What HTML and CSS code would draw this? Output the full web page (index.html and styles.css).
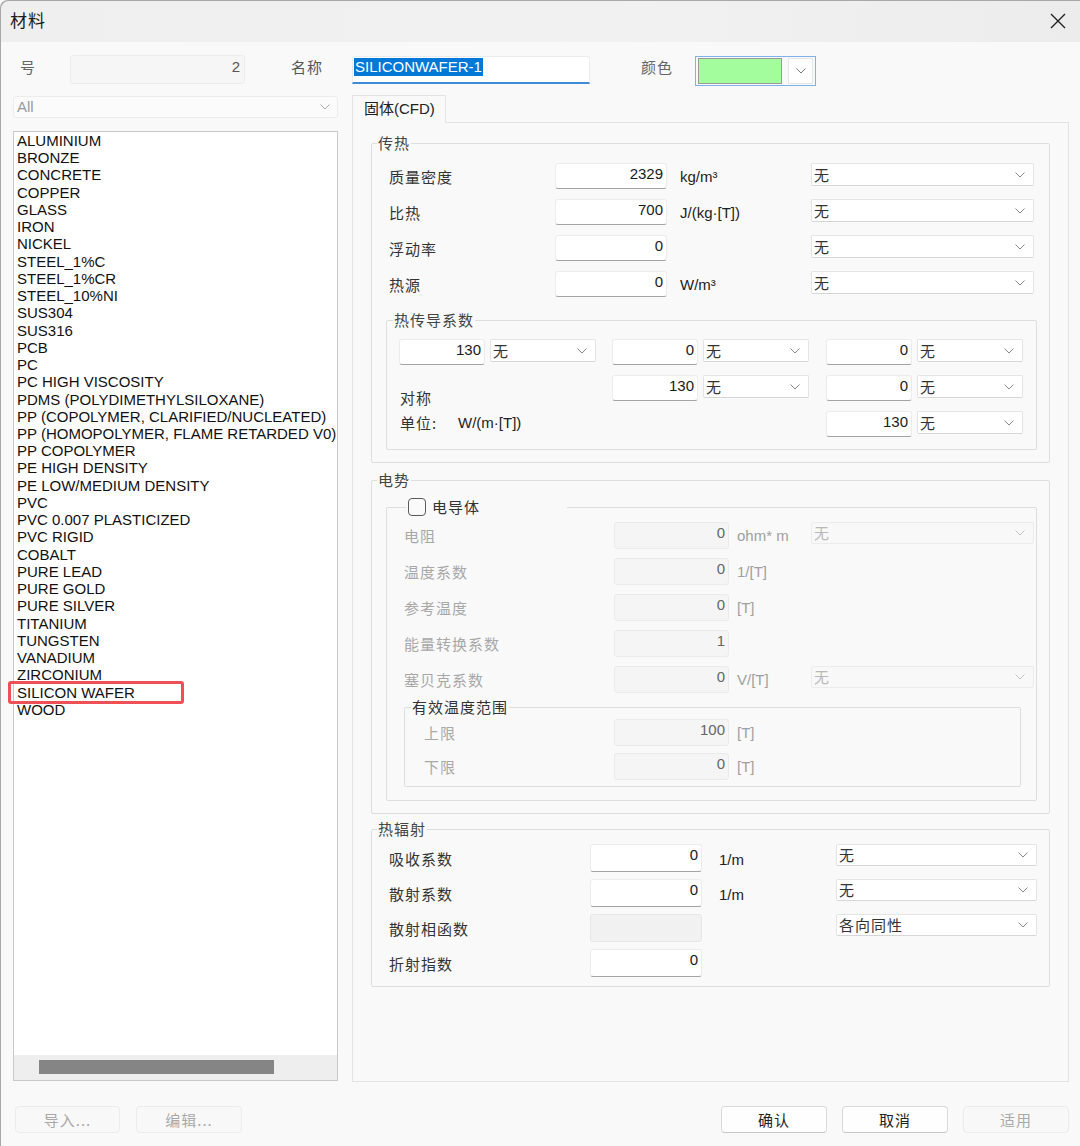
FILE: index.html
```html
<!DOCTYPE html>
<html lang="zh-CN">
<head>
<meta charset="utf-8">
<title>材料</title>
<link rel="stylesheet" href="styles.css">
</head>
<body>
<div class="window">
  <div class="titlebar">
    <span class="title">材料</span>
    <svg class="close" width="16" height="16" viewBox="0 0 16 16"><path d="M1 1 L15 15 M15 1 L1 15" stroke="#222" stroke-width="1.4" fill="none"/></svg>
  </div>

  <div class="toprow">
    <span class="lbl lbl-no">号</span>
    <div class="f-no">2</div>
    <span class="lbl lbl-name">名称</span>
    <div class="namefield"><span class="sel">SILICONWAFER-1</span></div>
    <span class="lbl lbl-color">颜色</span>
    <div class="colorcombo">
      <div class="swatch"></div>
      <div class="cbtn"><svg class="chev" width="10" height="6" viewBox="0 0 10 6"><path d="M0.5 0.5 L5 5 L9.5 0.5" fill="none" stroke="#777" stroke-width="1"/></svg></div>
    </div>
  </div>

  <div class="main">
    <div class="leftcol">
      <div class="filter"><span>All</span><svg class="chev" width="10" height="6" viewBox="0 0 10 6"><path d="M0.5 0.5 L5 5 L9.5 0.5" fill="none" stroke="#aaa" stroke-width="1"/></svg></div>
      <div class="list">
        <div class="items">
          <div class="it">ALUMINIUM</div>
          <div class="it">BRONZE</div>
          <div class="it">CONCRETE</div>
          <div class="it">COPPER</div>
          <div class="it">GLASS</div>
          <div class="it">IRON</div>
          <div class="it">NICKEL</div>
          <div class="it">STEEL_1%C</div>
          <div class="it">STEEL_1%CR</div>
          <div class="it">STEEL_10%NI</div>
          <div class="it">SUS304</div>
          <div class="it">SUS316</div>
          <div class="it">PCB</div>
          <div class="it">PC</div>
          <div class="it">PC HIGH VISCOSITY</div>
          <div class="it">PDMS (POLYDIMETHYLSILOXANE)</div>
          <div class="it">PP (COPOLYMER, CLARIFIED/NUCLEATED)</div>
          <div class="it">PP (HOMOPOLYMER, FLAME RETARDED V0)</div>
          <div class="it">PP COPOLYMER</div>
          <div class="it">PE HIGH DENSITY</div>
          <div class="it">PE LOW/MEDIUM DENSITY</div>
          <div class="it">PVC</div>
          <div class="it">PVC 0.007 PLASTICIZED</div>
          <div class="it">PVC RIGID</div>
          <div class="it">COBALT</div>
          <div class="it">PURE LEAD</div>
          <div class="it">PURE GOLD</div>
          <div class="it">PURE SILVER</div>
          <div class="it">TITANIUM</div>
          <div class="it">TUNGSTEN</div>
          <div class="it">VANADIUM</div>
          <div class="it">ZIRCONIUM</div>
          <div class="it marked">SILICON WAFER<span class="mark"></span></div>
          <div class="it">WOOD</div>
        </div>
        <div class="hscroll"><div class="thumb"></div></div>
      </div>
    </div>

    <div class="rightcol">
      <div class="tabs"><div class="tab">固体(CFD)</div></div>
      <div class="panel">

        <fieldset class="grp g1">
          <legend>传热</legend>
          <div class="gbody">
            <div class="rows r1">
              <span class="lab">质量密度</span><div class="in">2329</div><span class="unit">kg/m³</span>
              <div class="combo"><span>无</span><svg class="chev" width="10" height="6" viewBox="0 0 10 6"><path d="M0.5 0.5 L5 5 L9.5 0.5" fill="none" stroke="#888" stroke-width="1"/></svg></div>
              <span class="lab">比热</span><div class="in">700</div><span class="unit">J/(kg·[T])</span>
              <div class="combo"><span>无</span><svg class="chev" width="10" height="6" viewBox="0 0 10 6"><path d="M0.5 0.5 L5 5 L9.5 0.5" fill="none" stroke="#888" stroke-width="1"/></svg></div>
              <span class="lab">浮动率</span><div class="in">0</div><span class="unit"></span>
              <div class="combo"><span>无</span><svg class="chev" width="10" height="6" viewBox="0 0 10 6"><path d="M0.5 0.5 L5 5 L9.5 0.5" fill="none" stroke="#888" stroke-width="1"/></svg></div>
              <span class="lab">热源</span><div class="in">0</div><span class="unit">W/m³</span>
              <div class="combo"><span>无</span><svg class="chev" width="10" height="6" viewBox="0 0 10 6"><path d="M0.5 0.5 L5 5 L9.5 0.5" fill="none" stroke="#888" stroke-width="1"/></svg></div>
            </div>

            <fieldset class="grp sub tcgrp">
              <legend>热传导系数</legend>
              <div class="tc">
                <div class="cell c1 r1c"><div class="in tin">130</div><div class="combo tcb"><span>无</span><svg class="chev" width="10" height="6" viewBox="0 0 10 6"><path d="M0.5 0.5 L5 5 L9.5 0.5" fill="none" stroke="#888" stroke-width="1"/></svg></div></div>
                <div class="cell c2 r1c"><div class="in tin">0</div><div class="combo tcb"><span>无</span><svg class="chev" width="10" height="6" viewBox="0 0 10 6"><path d="M0.5 0.5 L5 5 L9.5 0.5" fill="none" stroke="#888" stroke-width="1"/></svg></div></div>
                <div class="cell c3 r1c"><div class="in tin">0</div><div class="combo tcb"><span>无</span><svg class="chev" width="10" height="6" viewBox="0 0 10 6"><path d="M0.5 0.5 L5 5 L9.5 0.5" fill="none" stroke="#888" stroke-width="1"/></svg></div></div>
                <div class="sym">
                  <div class="symline">对称</div>
                  <div class="symline"><span class="ulab">单位:</span><span class="uval">W/(m·[T])</span></div>
                </div>
                <div class="cell c2 r2c"><div class="in tin">130</div><div class="combo tcb"><span>无</span><svg class="chev" width="10" height="6" viewBox="0 0 10 6"><path d="M0.5 0.5 L5 5 L9.5 0.5" fill="none" stroke="#888" stroke-width="1"/></svg></div></div>
                <div class="cell c3 r2c"><div class="in tin">0</div><div class="combo tcb"><span>无</span><svg class="chev" width="10" height="6" viewBox="0 0 10 6"><path d="M0.5 0.5 L5 5 L9.5 0.5" fill="none" stroke="#888" stroke-width="1"/></svg></div></div>
                <div class="cell c3 r3c"><div class="in tin">130</div><div class="combo tcb"><span>无</span><svg class="chev" width="10" height="6" viewBox="0 0 10 6"><path d="M0.5 0.5 L5 5 L9.5 0.5" fill="none" stroke="#888" stroke-width="1"/></svg></div></div>
              </div>
            </fieldset>
          </div>
        </fieldset>

        <fieldset class="grp g2">
          <legend>电势</legend>
          <div class="gbody">
            <fieldset class="grp sub egrp">
              <legend class="cblegend"><span class="cbox"></span><span class="cbtext">电导体</span></legend>
              <div class="rows r2">
                <span class="lab dis">电阻</span><div class="in din">0</div><span class="unit dis">ohm* m</span>
                <div class="combo dcombo"><span>无</span><svg class="chev" width="10" height="6" viewBox="0 0 10 6"><path d="M0.5 0.5 L5 5 L9.5 0.5" fill="none" stroke="#c4c4c4" stroke-width="1"/></svg></div>
                <span class="lab dis">温度系数</span><div class="in din">0</div><span class="unit dis">1/[T]</span><span></span>
                <span class="lab dis">参考温度</span><div class="in din">0</div><span class="unit dis">[T]</span><span></span>
                <span class="lab dis">能量转换系数</span><div class="in din">1</div><span class="unit dis"></span><span></span>
                <span class="lab dis">塞贝克系数</span><div class="in din">0</div><span class="unit dis">V/[T]</span>
                <div class="combo dcombo"><span>无</span><svg class="chev" width="10" height="6" viewBox="0 0 10 6"><path d="M0.5 0.5 L5 5 L9.5 0.5" fill="none" stroke="#c4c4c4" stroke-width="1"/></svg></div>
              </div>
              <fieldset class="grp range">
                <legend>有效温度范围</legend>
                <div class="rows r3">
                  <span class="lab dis">上限</span><div class="in din">100</div><span class="unit dis">[T]</span>
                  <span class="lab dis">下限</span><div class="in din">0</div><span class="unit dis">[T]</span>
                </div>
              </fieldset>
            </fieldset>
          </div>
        </fieldset>

        <fieldset class="grp g3">
          <legend>热辐射</legend>
          <div class="gbody">
            <div class="rows r4">
              <span class="lab">吸收系数</span><div class="in rin">0</div><span class="unit">1/m</span>
              <div class="combo rcombo"><span>无</span><svg class="chev" width="10" height="6" viewBox="0 0 10 6"><path d="M0.5 0.5 L5 5 L9.5 0.5" fill="none" stroke="#888" stroke-width="1"/></svg></div>
              <span class="lab">散射系数</span><div class="in rin">0</div><span class="unit">1/m</span>
              <div class="combo rcombo"><span>无</span><svg class="chev" width="10" height="6" viewBox="0 0 10 6"><path d="M0.5 0.5 L5 5 L9.5 0.5" fill="none" stroke="#888" stroke-width="1"/></svg></div>
              <span class="lab">散射相函数</span><div class="in rin gray"></div><span class="unit"></span>
              <div class="combo rcombo"><span>各向同性</span><svg class="chev" width="10" height="6" viewBox="0 0 10 6"><path d="M0.5 0.5 L5 5 L9.5 0.5" fill="none" stroke="#888" stroke-width="1"/></svg></div>
              <span class="lab">折射指数</span><div class="in rin">0</div><span class="unit"></span><span></span>
            </div>
          </div>
        </fieldset>

      </div>
    </div>
  </div>

  <div class="buttons">
    <div class="btn disabled">导入...</div>
    <div class="btn disabled">编辑...</div>
    <div class="spacer"></div>
    <div class="btn">确认</div>
    <div class="btn">取消</div>
    <div class="btn disabled">适用</div>
  </div>
</div>
</body>
</html>
```

FILE: styles.css
```css
* { box-sizing: border-box; }
html, body { margin: 0; padding: 0; }
body {
  width: 1080px;
  height: 1146px;
  overflow: hidden;
  background: #f9f9f9;
  font-family: "Liberation Sans", Arial, "Noto Sans CJK SC", sans-serif;
  font-size: 15px;
  color: #222;
}
.window {
  width: 1080px;
  height: 1146px;
  background: #f9f9f9;
  box-shadow: inset 1px 1px 0 #a8a8a8;
  border-top-left-radius: 8px;
  display: flex;
  flex-direction: column;
  overflow: hidden;
}

/* title bar */
.titlebar {
  height: 42px;
  flex: none;
  background: linear-gradient(90deg, #efefef, #f1f1f1 60%, #ececec);
  box-shadow: inset 1px 1px 0 #a8a8a8;
  border-top-left-radius: 8px;
  display: flex;
  align-items: center;
  justify-content: space-between;
  padding: 0 14px 0 10px;
}
.title {
  font-family: "Noto Sans CJK SC", sans-serif;
  font-size: 17px;
  letter-spacing: 1px;
  color: #1b1b1b;
  line-height: 20px;
  margin-top: -2px;
}
.close { display: block; margin-top: -1px; }

/* top row */
.toprow {
  margin-top: 13px;
  height: 31px;
  flex: none;
  display: flex;
  align-items: flex-start;
  padding-left: 13px;
}
.lbl {
  font-family: "Noto Sans CJK SC", sans-serif;
  font-size: 15px;
  letter-spacing: 1px;
  line-height: 24px;
  color: #666;
}
.lbl-no { width: 57px; padding-left: 7px; }
.f-no {
  width: 175px;
  height: 29px;
  background: #f6f6f6;
  border: 1px solid #ececec;
  border-radius: 3px;
  text-align: right;
  padding: 0 4px;
  line-height: 22px;
  color: #555;
}
.lbl-name { margin-left: 46px; width: 61px; color: #555; }
.namefield {
  width: 238px;
  height: 28px;
  margin-top: 1px;
  background: #fff;
  border: 1px solid #ececec;
  border-bottom: 2px solid #3f8ad9;
  border-radius: 3px 3px 0 0;
  padding: 1px 1px;
}
.sel {
  display: inline-block;
  background: #0078d7;
  color: #fff;
  line-height: 18px;
  height: 18px;
  padding: 0 1px;
}
.lbl-color { margin-left: 51px; width: 54px; }
.colorcombo {
  width: 121px;
  height: 30px;
  margin-top: 1px;
  border: 1px solid #7db3ea;
  display: flex;
  align-items: center;
  padding: 0 2px 0 2px;
}
.swatch {
  width: 84px;
  height: 26px;
  background: #a4fd9c;
  border: 1px solid #9a9a9a;
}
.cbtn {
  margin-left: 6px;
  width: 25px;
  height: 26px;
  background: #fff;
  border: 1px solid #e6e6e6;
  display: flex;
  align-items: center;
  justify-content: center;
}
.chev { display: block; flex: none; }

/* main */
.main {
  margin-top: 9px;
  height: 987px;
  flex: none;
  display: flex;
  padding-left: 13px;
}
.leftcol {
  width: 325px;
  display: flex;
  flex-direction: column;
}
.filter {
  margin-top: 1px;
  height: 22px;
  background: #fbfbfb;
  border: 1px solid #ececec;
  border-radius: 3px;
  padding: 0 7px 0 3px;
  color: #9a9a9a;
  line-height: 20px;
  display: flex;
  align-items: center;
  justify-content: space-between;
}
.list {
  margin-top: 13px;
  height: 950px;
  border: 1px solid #c9c9c9;
  background: #fff;
  display: flex;
  flex-direction: column;
}
.items {
  flex: 1;
  padding: 0 0 0 3px;
}
.it {
  line-height: 17.24px;
  height: 17.24px;
  white-space: nowrap;
  color: #111;
}
.marked { position: relative; }
.mark {
  position: absolute;
  left: -9px;
  top: -3px;
  width: 176px;
  height: 23px;
  border: 3px solid #ef5058;
  border-radius: 3px;
}
.hscroll {
  height: 25px;
  flex: none;
  background: #eeeeee;
  padding: 5px 0 0 25px;
}
.thumb {
  width: 235px;
  height: 14px;
  background: #858585;
}

.rightcol {
  margin-left: 14px;
  width: 717px;
  display: flex;
  flex-direction: column;
}
.tabs {
  height: 28px;
  display: flex;
  margin-bottom: -1px;
  position: relative;
  z-index: 1;
}
.tab {
  width: 94px;
  height: 28px;
  border: 1px solid #e3e3e3;
  border-bottom: none;
  background: #f9f9f9;
  padding-left: 11px;
  line-height: 26px;
  color: #222;
}
.panel {
  height: 960px;
  border: 1px solid #e3e3e3;
  background: #f9f9f9;
  padding: 10px 18px 0 18px;
}

/* group boxes */
.grp {
  margin: 0;
  padding: 0;
  min-width: 0;
  border: 1px solid #dedede;
  border-radius: 2px;
}
.grp > legend {
  padding: 0 1px;
  margin-left: 5px;
  height: 20px;
  line-height: 20px;
  font-family: "Noto Sans CJK SC", sans-serif;
  font-size: 15px;
  letter-spacing: 1px;
  color: #444;
}
.g1, .g2, .g3 { width: 679px; }
.gbody { padding: 10px 12px 12px 14px; }

.rows {
  display: grid;
  align-items: start;
}
.lab {
  font-family: "Noto Sans CJK SC", sans-serif;
  font-size: 15px;
  letter-spacing: 1px;
  color: #333;
  white-space: nowrap;
  align-self: center;
}
.lab.dis { color: #a8a8a8; }
.unit {
  align-self: center;
  white-space: nowrap;
  color: #222;
}
.unit.dis { color: #a0a0a0; }

.in {
  height: 26px;
  background: #fff;
  border: 1px solid #ececec;
  border-bottom-color: #a3a3a3;
  border-radius: 3px;
  text-align: right;
  padding: 0 3px;
  line-height: 20px;
  color: #1a1a1a;
}
.in.din {
  height: 27px;
  background: #f5f5f5;
  border-color: #ebebeb;
  color: #666;
}
.in.gray {
  background: #f1f1f1;
  border-color: #e6e6e6;
}
.combo {
  height: 23px;
  background: #fff;
  border: 1px solid #e4e4e4;
  border-bottom-color: #d6d6d6;
  border-radius: 2px;
  display: flex;
  align-items: center;
  justify-content: space-between;
  padding: 0 8px 0 2px;
  font-family: "Noto Sans CJK SC", sans-serif;
  font-size: 15px;
  letter-spacing: 1px;
  color: #333;
  line-height: 20px;
}
.combo.dcombo {
  height: 22px;
  background: #f8f8f8;
  border-color: #ececec;
  color: #b8b8b8;
}

/* group 1 */
.r1 {
  grid-template-columns: 166px 112px 144px 223px;
  row-gap: 10px;
  margin-left: 3px;
}
.r1 .unit { padding-left: 13px; }

.sub { width: 651px; }
.tcgrp { margin-top: 13px; }
.tcgrp > legend { margin-left: 6px; }
.tc {
  display: grid;
  grid-template-columns: 197px 197px 197px;
  grid-template-rows: 26px 26px 26px;
  column-gap: 16px;
  row-gap: 10px;
  padding: 9px 0 12px 12px;
}
.cell { display: flex; align-items: flex-start; gap: 5px; }
.c1 { grid-column: 1; }
.c2 { grid-column: 2; }
.c3 { grid-column: 3; margin-left: 1px; }
.r1c { grid-row: 1; }
.r2c { grid-row: 2; }
.r3c { grid-row: 3; }
.tin { width: 86px; flex: none; }
.tcb { width: 106px; flex: none; }
.sym {
  grid-column: 1;
  grid-row: 2 / span 2;
  align-self: end;
  margin-bottom: 2px;
  padding-left: 1px;
}
.symline {
  height: 25px;
  line-height: 25px;
  display: flex;
  font-family: "Noto Sans CJK SC", sans-serif;
  letter-spacing: 1px;
  color: #333;
}
.ulab { width: 58px; }
.uval { font-family: "Liberation Sans", Arial, sans-serif; letter-spacing: 0; color: #222; }

/* group 2 */
.g2 { margin-top: 7px; }
.g2 > .gbody { padding: 6px 12px 12px 14px; }
.cblegend {
  margin-left: 19px !important;
  width: 161px;
  height: 22px !important;
  display: flex;
  align-items: center;
  padding: 0 !important;
}
.cbox {
  width: 18px;
  height: 18px;
  margin-left: 2px;
  border: 1.5px solid #5a5a5a;
  border-radius: 4px;
  background: #fafafa;
  flex: none;
}
.cbtext { margin-left: 6px; color: #333; }
.egrp { padding-bottom: 13px; }
.r2 {
  grid-template-columns: 210px 115px 82px 223px;
  grid-auto-rows: 27px;
  row-gap: 9px;
  padding: 4px 0 0 17px;
}
.r2 .unit { padding-left: 8px; }
.range {
  margin: 4px 0 0 17px;
  width: 617px;
}
.range > legend { margin-left: 6px; color: #333; }
.r3 {
  grid-template-columns: 190px 115px 82px;
  grid-auto-rows: 27px;
  row-gap: 7px;
  padding: 2px 0 6px 19px;
}
.r3 .unit { padding-left: 8px; }

/* group 3 */
.g3 { margin-top: 5px; }
.g3 > .gbody { padding: 5px 12px 9px 14px; }
.r4 {
  grid-template-columns: 201px 112px 134px 201px;
  grid-auto-rows: 28px;
  row-gap: 7px;
  margin-left: 3px;
}
.r4 .unit { padding-left: 17px; padding-top: 3px; }
.rin { height: 28px; line-height: 20px; }
.rcombo { height: 22px; }

/* buttons */
.buttons {
  margin-top: 24px;
  height: 27px;
  flex: none;
  display: flex;
  padding: 0 11px 0 15px;
}
.btn {
  width: 106px;
  height: 27px;
  background: #fefefe;
  border: 1px solid #d9d9d9;
  border-bottom-color: #c6c6c6;
  border-radius: 4px;
  text-align: center;
  line-height: 25px;
  font-family: "Noto Sans CJK SC", sans-serif;
  font-size: 15px;
  letter-spacing: 1px;
  color: #222;
  margin-right: 15px;
}
.btn:last-child { margin-right: 0; }
.btn:nth-child(2) { margin-right: 0; }
.btn:first-child { margin-right: 16px; width: 105px; }
.btn.disabled {
  background: #f8f8f8;
  border-color: #ececec;
  color: #a9a9a9;
}
.spacer { flex: 1; }
```
